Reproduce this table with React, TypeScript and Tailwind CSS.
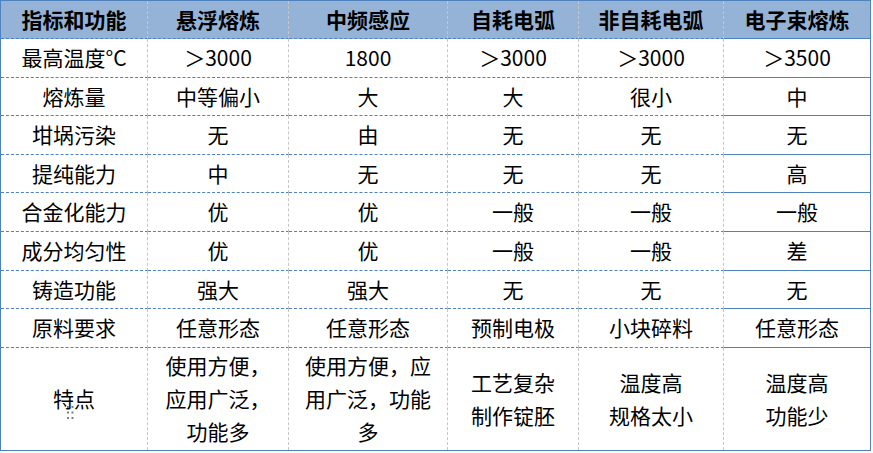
const headers = ["指标和功能", "悬浮熔炼", "中频感应", "自耗电弧", "非自耗电弧", "电子束熔炼"];

const rows: string[][] = [
  ["最高温度°C", "＞3000", "1800", "＞3000", "＞3000", "＞3500"],
  ["熔炼量", "中等偏小", "大", "大", "很小", "中"],
  ["坩埚污染", "无", "由", "无", "无", "无"],
  ["提纯能力", "中", "无", "无", "无", "高"],
  ["合金化能力", "优", "优", "一般", "一般", "一般"],
  ["成分均匀性", "优", "优", "一般", "一般", "差"],
  ["铸造功能", "强大", "强大", "无", "无", "无"],
  ["原料要求", "任意形态", "任意形态", "预制电极", "小块碎料", "任意形态"],
];

const lastRow: string[][] = [
  ["特点"],
  ["使用方便，", "应用广泛，", "功能多"],
  ["使用方便，应", "用广泛，功能", "多"],
  ["工艺复杂", "制作锭胚"],
  ["温度高", "规格太小"],
  ["温度高", "功能少"],
];

function cellBorders(col: number, last: boolean) {
  const right = col < 5 ? "border-r border-dashed border-r-[#c6c6c6]" : "";
  const bottom = last ? "" : "border-b border-b-[#4f81bd]";
  return `${right} ${bottom}`;
}

// small grip shown under the last row's label
function DragDots() {
  return (
    <svg className="absolute left-[65px] top-[57px]" width="8" height="14" viewBox="0 0 8 14">
      {[0, 1, 2].map((r) =>
        [0, 1].map((c) => <rect key={`${r}${c}`} x={1 + c * 4.5} y={1 + r * 5.5} width="2" height="2" fill="#7f7f7f" />)
      )}
    </svg>
  );
}

export default function App() {
  return (
    <div className="bg-white" style={{ fontFamily: '"Noto Sans CJK SC", "Noto Sans", sans-serif' }}>
      <div className="grid h-[451px] w-[871px] grid-cols-[147px_141px_159px_131px_145px_1fr] grid-rows-[38px_repeat(8,38.6px)_1fr] border-[1.5px] border-[#4f81bd] text-[21px] text-black">
        {headers.map((h, c) => (
          <div
            key={h}
            className={`flex items-center justify-center bg-[#95b3d7] font-bold ${cellBorders(c, false)} border-b-[1.5px]`}
          >
            {h}
          </div>
        ))}
        {rows.map((row, r) =>
          row.map((cell, c) => (
            <div key={`${r}-${c}`} className={`flex items-center justify-center ${cellBorders(c, false)}`}>
              {cell}
            </div>
          ))
        )}
        {lastRow.map((lines, c) => (
          <div
            key={`last-${c}`}
            className={`relative flex flex-col items-center justify-center leading-[33px] ${cellBorders(c, true)}`}
          >
            {lines.map((line) => (
              <span key={line}>{line}</span>
            ))}
            {c === 0 ? <DragDots /> : null}
          </div>
        ))}
      </div>
    </div>
  );
}
